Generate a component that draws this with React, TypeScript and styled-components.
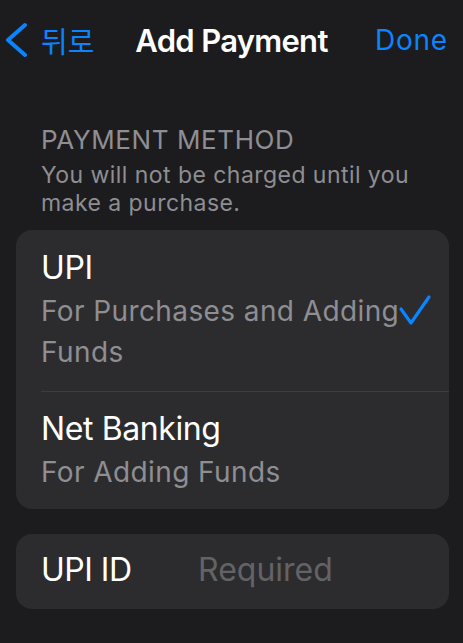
import React from "react";
import styled, { createGlobalStyle } from "styled-components";

const GlobalStyle = createGlobalStyle`
  html, body {
    margin: 0;
    padding: 0;
    background: #1c1c1e;
  }
  body {
    font-family: Inter, "Noto Sans CJK KR", sans-serif;
    -webkit-font-smoothing: antialiased;
  }
`;

const Screen = styled.div`
  width: 463px;
  height: 643px;
  background: #1c1c1e;
  display: flex;
  flex-direction: column;
  overflow: hidden;
`;

const NavBar = styled.div`
  height: 80px;
  display: grid;
  grid-template-columns: 1fr auto 1fr;
  align-items: center;
  padding: 0 15px;
`;

const BackButton = styled.button`
  display: flex;
  align-items: center;
  gap: 14px;
  margin-left: -10px;
  background: none;
  border: none;
  padding: 0;
  color: #0a84ff;
  font-family: Inter, "Noto Sans CJK KR", sans-serif;
  font-size: 29px;
  cursor: pointer;
  justify-self: start;
`;

const NavTitle = styled.div`
  color: #ffffff;
  font-size: 31px;
  font-weight: 600;
  letter-spacing: -0.7px;
`;

const DoneButton = styled.button`
  justify-self: end;
  background: none;
  border: none;
  padding: 0;
  color: #0a84ff;
  font-family: Inter, sans-serif;
  font-size: 28px;
  letter-spacing: 0.8px;
  cursor: pointer;
`;

const Content = styled.div`
  display: flex;
  flex-direction: column;
  padding: 44px 14px 0 16px;
`;

const SectionHeader = styled.div`
  padding: 0 25px 13px;
  color: #8e8e93;
`;

const HeaderTitle = styled.div`
  font-size: 26px;
  line-height: 32px;
  letter-spacing: 0.6px;
  text-transform: uppercase;
`;

const HeaderNote = styled.div`
  margin-top: 5px;
  font-size: 23px;
  line-height: 28px;
  letter-spacing: 0.45px;
`;

const Card = styled.div<{ $gap?: number }>`
  background: #2c2c2e;
  border-radius: 16px;
  margin-bottom: ${(p) => p.$gap ?? 0}px;
  overflow: hidden;
`;

const OptionRow = styled.div<{ $top: number; $bottom: number }>`
  display: flex;
  align-items: center;
  margin-left: 25px;
  padding: ${(p) => p.$top}px 17px ${(p) => p.$bottom}px 0;
  & + & {
    border-top: 1px solid #3d3d41;
  }
`;

const OptionText = styled.div`
  flex: 1;
  min-width: 0;
`;

const OptionTitle = styled.div`
  color: #ffffff;
  font-size: 32px;
  line-height: 47px;
  letter-spacing: -0.4px;
`;

const OptionSub = styled.div`
  color: #8e8e93;
  font-size: 28px;
  line-height: 41px;
  letter-spacing: 0.4px;
`;

const Check = styled.svg`
  flex: none;
  width: 34px;
  height: 32px;
  margin-top: 3px;
  margin-left: -2px;
`;

const FieldRow = styled.div`
  display: flex;
  align-items: center;
  padding: 12px 19px 16px 25px;
  font-size: 32px;
  line-height: 47px;
`;

const FieldLabel = styled.div`
  width: 157px;
  color: #ffffff;
  letter-spacing: -0.5px;
`;

const FieldInput = styled.input`
  flex: 1;
  min-width: 0;
  background: none;
  border: none;
  outline: none;
  padding: 0;
  color: #ffffff;
  font-family: Inter, sans-serif;
  font-size: 32px;
  line-height: 47px;
  &::placeholder {
    color: #636366;
  }
`;

const ChevronLeft = () => (
  <svg width="22" height="36" viewBox="0 0 22 36" fill="none">
    <path
      d="M20 3 L3 18 L20 33"
      stroke="#0a84ff"
      strokeWidth="4"
      strokeLinecap="round"
      strokeLinejoin="round"
    />
  </svg>
);

type Option = {
  key: string;
  title: string;
  subtitle: string;
  selected: boolean;
  top: number;
  bottom: number;
};

const options: Option[] = [
  {
    key: "upi",
    title: "UPI",
    subtitle: "For Purchases and Adding Funds",
    selected: true,
    top: 14,
    bottom: 18,
  },
  {
    key: "netbanking",
    title: "Net Banking",
    subtitle: "For Adding Funds",
    selected: false,
    top: 13,
    bottom: 16,
  },
];

const App = () => {
  return (
    <Screen>
      <GlobalStyle />
      <NavBar>
        <BackButton>
          <ChevronLeft />
          뒤로
        </BackButton>
        <NavTitle>Add Payment</NavTitle>
        <DoneButton>Done</DoneButton>
      </NavBar>
      <Content>
        <SectionHeader>
          <HeaderTitle>Payment Method</HeaderTitle>
          <HeaderNote>
            You will not be charged until you make a purchase.
          </HeaderNote>
        </SectionHeader>
        <Card $gap={25}>
          {options.map((o) => (
            <OptionRow key={o.key} $top={o.top} $bottom={o.bottom}>
              <OptionText>
                <OptionTitle>{o.title}</OptionTitle>
                <OptionSub>{o.subtitle}</OptionSub>
              </OptionText>
              {o.selected && (
                <Check viewBox="0 0 34 32" fill="none">
                  <path
                    d="M3 15 L13 29 L31 3"
                    stroke="#0a84ff"
                    strokeWidth="3.2"
                    strokeLinecap="round"
                    strokeLinejoin="round"
                  />
                </Check>
              )}
            </OptionRow>
          ))}
        </Card>
        <Card>
          <FieldRow>
            <FieldLabel>UPI ID</FieldLabel>
            <FieldInput placeholder="Required" />
          </FieldRow>
        </Card>
      </Content>
    </Screen>
  );
};

export default App;
